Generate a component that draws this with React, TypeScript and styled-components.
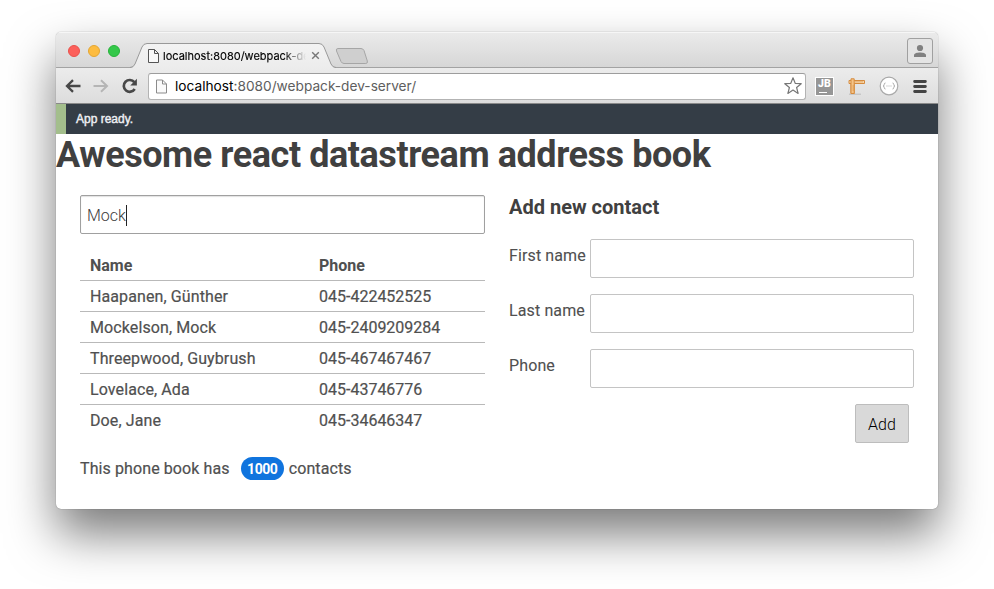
import React, { useState } from "react";
import styled, { createGlobalStyle } from "styled-components";

const GlobalStyle = createGlobalStyle`
  *, *::before, *::after { box-sizing: border-box; }
  body { margin: 0; background: #fff; font-family: Roboto, sans-serif; overflow: hidden; }
  h1, h2, p { margin: 0; }
`;

const Desktop = styled.main`
  height: 589px;
  padding: 32px 56px 80px;
`;

const BrowserWindow = styled.section`
  width: 882px;
  height: 477px;
  overflow: hidden;
  border-radius: 5px;
  background: #fff;
  box-shadow: 0 0 1px rgba(0, 0, 0, 0.55), 0 25px 48px rgba(0, 0, 0, 0.52);
`;

const TabStrip = styled.header`
  display: flex;
  height: 36px;
  background: linear-gradient(#ebebeb, #d6d6d6);
  box-shadow: inset 0 1px #f6f6f6, inset 0 -1px #a3a3a3;
`;

const WindowControls = styled.div`
  display: flex;
  gap: 8px;
  width: 74px;
  padding: 13px 0 0 12px;
`;

const Light = styled.span<{ $fill: string; $edge: string }>`
  width: 12px;
  height: 12px;
  border-radius: 50%;
  background: ${(p) => p.$fill};
  border: 1px solid ${(p) => p.$edge};
`;

const Tab = styled.div`
  position: relative;
  display: flex;
  align-items: center;
  width: 206px;
  height: 25px;
  margin-top: 11px;
  padding-left: 18px;
`;

const TabShape = styled.svg`
  position: absolute;
  inset: 0;
`;

const TabTitle = styled.span`
  position: relative;
  width: 143px;
  margin: 0 5px 0 4px;
  overflow: hidden;
  white-space: nowrap;
  font: 11px/16px Inter, sans-serif;
  color: #000;
  -webkit-text-stroke: 0.15px #000;
  mask-image: linear-gradient(to right, #000 120px, transparent 143px);
`;

const Glyph = styled.svg`
  position: relative;
  flex: none;
  display: block;
`;

const NewTab = styled(Glyph)`
  margin: 16px 0 0 -1px;
`;

const ProfileButton = styled.div`
  display: grid;
  place-items: center;
  width: 26px;
  height: 26px;
  margin: 6px 5px 0 auto;
  border: 1px solid #a0a0a0;
  border-radius: 3px;
  background: #e4e4e4;
`;

const Toolbar = styled.nav`
  display: flex;
  align-items: center;
  height: 36px;
  padding: 0 11px 0 9px;
  background: linear-gradient(#ececec, #dcdcdc);
  box-shadow: inset 0 -1px #898989;
`;

const NavIcons = styled.div`
  display: flex;
  align-items: center;
  gap: 12px;
  width: 83px;
`;

const AddressBar = styled.div`
  display: flex;
  align-items: center;
  width: 658px;
  height: 27px;
  padding: 0 3px 0 7px;
  border: 1px solid #b3b3b3;
  border-top-color: #9d9d9d;
  border-radius: 3px;
  background: #fff;
`;

const Url = styled.span`
  margin-left: 8px;
  flex: 1;
  font: 13.7px/20px Inter, sans-serif;
  color: #5e5e5e;

  b { font-weight: 400; color: #000; }
`;

const Extensions = styled.div`
  display: flex;
  align-items: center;
  justify-content: space-between;
  flex: 1;
  margin-left: 9px;
`;

const JetBrainsBadge = styled.span`
  display: flex;
  flex-direction: column;
  width: 19px;
  height: 19px;
  padding: 1px 2px;
  border: 1px solid #fff;
  background: #969696;
  font: 900 10.5px/10px Roboto, sans-serif;
  color: #fff;

  &::after { content: ""; width: 8px; height: 1px; margin: 3px 0 0 1px; background: #fff; }
`;

const StatusBar = styled.div`
  height: 30px;
  border-left: 10px solid #a3be8c;
  padding-left: 10px;
  background: #343d46;
  color: #eff1f5;
  font: 12px/30px "Liberation Sans", Arial, sans-serif;
  -webkit-text-stroke: 0.4px #eff1f5;
`;

const Heading = styled.h1`
  height: 61px;
  font: 700 36px/42px Roboto, sans-serif;
  letter-spacing: -0.44px;
  color: #404040;
  white-space: nowrap;
`;

const Columns = styled.div`
  display: grid;
  grid-template-columns: 405px 405px;
  gap: 24px;
  padding: 0 24px;
`;

const Field = styled.input`
  display: block;
  width: 100%;
  height: 39px;
  padding: 0 7px;
  border: 1px solid #c4c4c4;
  border-radius: 2px;
  outline: none;
  background: #fff;
  font: 300 16px/20px Roboto, sans-serif;
  color: #404040;
`;

const SearchBox = styled.label`
  display: flex;
  align-items: center;
  height: 39px;
  padding: 1px 6px 0;
  border: 1px solid #a0a0a0;
  border-radius: 2px;
  box-shadow: inset 0 1px 1px #e2e2e2;
  font: 300 16px/23px Roboto, sans-serif;
  color: #404040;
`;

const Caret = styled.span`
  width: 1px;
  height: 21px;
  background: #222;
`;

const ContactTable = styled.table`
  width: 100%;
  margin-top: 16px;
  border-collapse: separate;
  border-spacing: 0;
  table-layout: fixed;
  font-size: 16px;
  line-height: 20px;
  color: #505050;

  th, td { height: 31px; padding: 1px 10px 0; text-align: left; border-bottom: 1px solid #b9b9b9; }
  th { font-weight: 700; }
  td { -webkit-text-stroke: 0.2px #505050; }
  td:first-child { letter-spacing: 0.1px; }
  th:first-child { width: 229px; }
  tr:last-child td { border-bottom: 0; padding-top: 0; }
`;

const Summary = styled.p`
  display: flex;
  align-items: center;
  height: 23px;
  margin-top: 21px;
  font-size: 16px;
  letter-spacing: 0.1px;
  color: #505050;
  -webkit-text-stroke: 0.2px #505050;
`;

const CountBadge = styled.span`
  width: 43px;
  height: 23px;
  margin: 0 5px 0 11px;
  border-radius: 12px;
  background: #1074de;
  color: #fff;
  font: 700 14px/24px Roboto, sans-serif;
  letter-spacing: -0.5px;
  text-align: center;
  -webkit-text-stroke: 0;
`;

const FormTitle = styled.h2`
  height: 44px;
  font: 700 20px/24px Roboto, sans-serif;
  color: #404040;
`;

const FormRow = styled.label`
  display: grid;
  grid-template-columns: 81px 324px;
  margin-bottom: 16px;
  font-size: 16px;
  line-height: 33px;
  letter-spacing: 0.12px;
  color: #505050;
  -webkit-text-stroke: 0.1px #505050;
`;

const AddButton = styled.button`
  display: block;
  width: 54px;
  height: 39px;
  margin: 0 5px 0 auto;
  padding: 1px 0 0;
  border: 1px solid #bdbdbd;
  border-radius: 2px;
  background: #d9d9d9;
  color: #000;
  font: 300 16px/37px Roboto, sans-serif;
`;

const contacts = [
  ["Haapanen, Günther", "045-422452525"],
  ["Mockelson, Mock", "045-2409209284"],
  ["Threepwood, Guybrush", "045-467467467"],
  ["Lovelace, Ada", "045-43746776"],
  ["Doe, Jane", "045-34646347"],
];

function PageIcon({ width, height, color }: { width: number; height: number; color: string }) {
  return (
    <Glyph width={width} height={height} viewBox="0 0 11 14" fill="#fafafa" stroke={color}>
      <path d="M.5.5h6l4 4v9H.5z M6.5.5v4h4" />
    </Glyph>
  );
}

function BrowserTabs() {
  return (
    <TabStrip>
      <WindowControls>
        <Light $fill="#fc605b" $edge="#e9514b" />
        <Light $fill="#fdbc40" $edge="#e4a632" />
        <Light $fill="#34c84a" $edge="#26b33a" />
      </WindowControls>
      <Tab>
        <TabShape width="206" height="25" viewBox="0 0 206 25">
          <defs>
            <linearGradient id="tabFill" x2="0" y2="1">
              <stop stopColor="#f3f3f3" />
              <stop offset="1" stopColor="#ececec" />
            </linearGradient>
          </defs>
          <path d="M0 25C3 24.5 4 23.5 5 21L12 4Q13.500.5 17 .5H189Q192.500.5 194 4L201 21Q202.500 24.500 206 25Z" fill="url(#tabFill)" />
          <path d="M0 24.500Q3.500 24.500 5 21L12 4Q13.500.5 17 .5H189Q192.500.5 194 4L201 21Q202.500 24.500 206 24.500" fill="none" stroke="#999" />
        </TabShape>
        <PageIcon width={11} height={14} color="#555" />
        <TabTitle>localhost:8080/webpack-dev-server/</TabTitle>
        <Glyph width="9" height="9" viewBox="0 0 9 9" stroke="#777" strokeWidth="1.4">
          <path d="M1.200 1.200l6.600 6.600m0-6.600l-6.600 6.600" />
        </Glyph>
      </Tab>
      <NewTab width="33" height="17" viewBox="0 0 33 17">
        <path d="M3 .5h23q2 0 3 2l3.300 10.500q.7 2.500-1.500 2.500H9q-2 0-3-2L1.500 3Q.7.5 3 .5z" fill="#cfcfcf" stroke="#a6a6a6" />
      </NewTab>
      <ProfileButton>
        <Glyph width="14" height="14" viewBox="0 0 14 14" fill="#808080">
          <circle cx="7" cy="4" r="3.100" />
          <path d="M1 13v-1.500C1 9.200 4.500 8.600 7 8.600s6 .6 6 2.900V13z" />
        </Glyph>
      </ProfileButton>
    </TabStrip>
  );
}

function BrowserToolbar() {
  return (
    <Toolbar>
      <NavIcons>
        <Glyph width="16" height="14" viewBox="0 0 16 14" fill="none" stroke="#484848" strokeWidth="2.300">
          <path d="M15.500 7H2M8 1.200L2 7l6 5.800" />
        </Glyph>
        <Glyph width="16" height="14" viewBox="0 0 16 14" fill="none" stroke="#b5b5b5" strokeWidth="2">
          <path d="M.5 7H14M8 1.200L14 7l-6 5.800" />
        </Glyph>
        <Glyph width="17" height="16" viewBox="0 0 17 16">
          <path d="M13.300 4.200A5.900 5.900 0 1 0 13.700 11" fill="none" stroke="#484848" strokeWidth="2.700" />
          <path d="M15.900.8v6.600H9.300z" fill="#484848" />
        </Glyph>
      </NavIcons>
      <AddressBar>
        <PageIcon width={11} height={15} color="#8b8b8b" />
        <Url><b>localhost</b>:8080/webpack-dev-server/</Url>
        <Glyph width="18" height="18" viewBox="0 0 18 18" fill="#fff" stroke="#777" strokeWidth="1.200" strokeLinejoin="round">
          <path d="M9 .8l2.200 5.500 6 .4-4.600 3.800 1.500 5.900L9 13.100l-5.100 3.300 1.500-5.900L.8 6.700l6-.4z" />
        </Glyph>
      </AddressBar>
      <Extensions>
        <JetBrainsBadge>JB</JetBrainsBadge>
        <Glyph width="18" height="17" viewBox="0 0 18 17">
          <path d="M1 16.200h12" stroke="#bbb" />
          <path d="M1 2.500h15.500V5.500H6.200v10H3V5.500H1z" fill="#f8d6a8" stroke="#d58b3e" />
          <path d="M3 .8h3.200V15.500H3z" fill="#f5c488" stroke="#d58b3e" />
          <path d="M8 3v1.500M10 3v1.500M12 3v1.500M14 3v1.500M4.500 8H6M4.500 10H6M4.500 12H6" stroke="#d58b3e" strokeWidth=".7" />
        </Glyph>
        <Glyph width="20" height="20" viewBox="0 0 20 20" fill="none" stroke="#aaa">
          <circle cx="10" cy="10" r="8.800" fill="#fff" strokeWidth="1.200" />
          <path d="M6.500 7Q5.200 7 5.200 8.500T4 10q1.200 0 1.200 1.500T6.500 13M13.500 7q1.300 0 1.300 1.500T16 10q-1.200 0-1.200 1.500T13.500 13" />
          <path d="M7.500 10h5" strokeDasharray="1 1" />
        </Glyph>
        <Glyph width="14" height="13" viewBox="0 0 14 13" stroke="#444" strokeWidth="2.800" strokeLinecap="round">
          <path d="M1.600 1.500h10.800M1.600 6.500h10.800M1.600 11.500h10.800" />
        </Glyph>
      </Extensions>
    </Toolbar>
  );
}

function ContactForm() {
  const [values, setValues] = useState<Record<string, string>>({});
  return (
    <form onSubmit={(e) => e.preventDefault()}>
      <FormTitle>Add new contact</FormTitle>
      {["First name", "Last name", "Phone"].map((name) => (
        <FormRow key={name}>
          {name}
          <Field value={values[name] ?? ""} onChange={(e) => setValues({ ...values, [name]: e.target.value })} />
        </FormRow>
      ))}
      <AddButton>Add</AddButton>
    </form>
  );
}

export default function App() {
  return (
    <Desktop>
      <GlobalStyle />
      <BrowserWindow>
        <BrowserTabs />
        <BrowserToolbar />
        <StatusBar>App ready.</StatusBar>
        <Heading>Awesome react datastream address book</Heading>
        <Columns>
          <div>
            <SearchBox>Mock<Caret /></SearchBox>
            <ContactTable>
              <thead>
                <tr><th>Name</th><th>Phone</th></tr>
              </thead>
              <tbody>
                {contacts.map(([name, phone]) => (
                  <tr key={name}><td>{name}</td><td>{phone}</td></tr>
                ))}
              </tbody>
            </ContactTable>
            <Summary>This phone book has<CountBadge>1000</CountBadge>contacts</Summary>
          </div>
          <ContactForm />
        </Columns>
      </BrowserWindow>
    </Desktop>
  );
}
